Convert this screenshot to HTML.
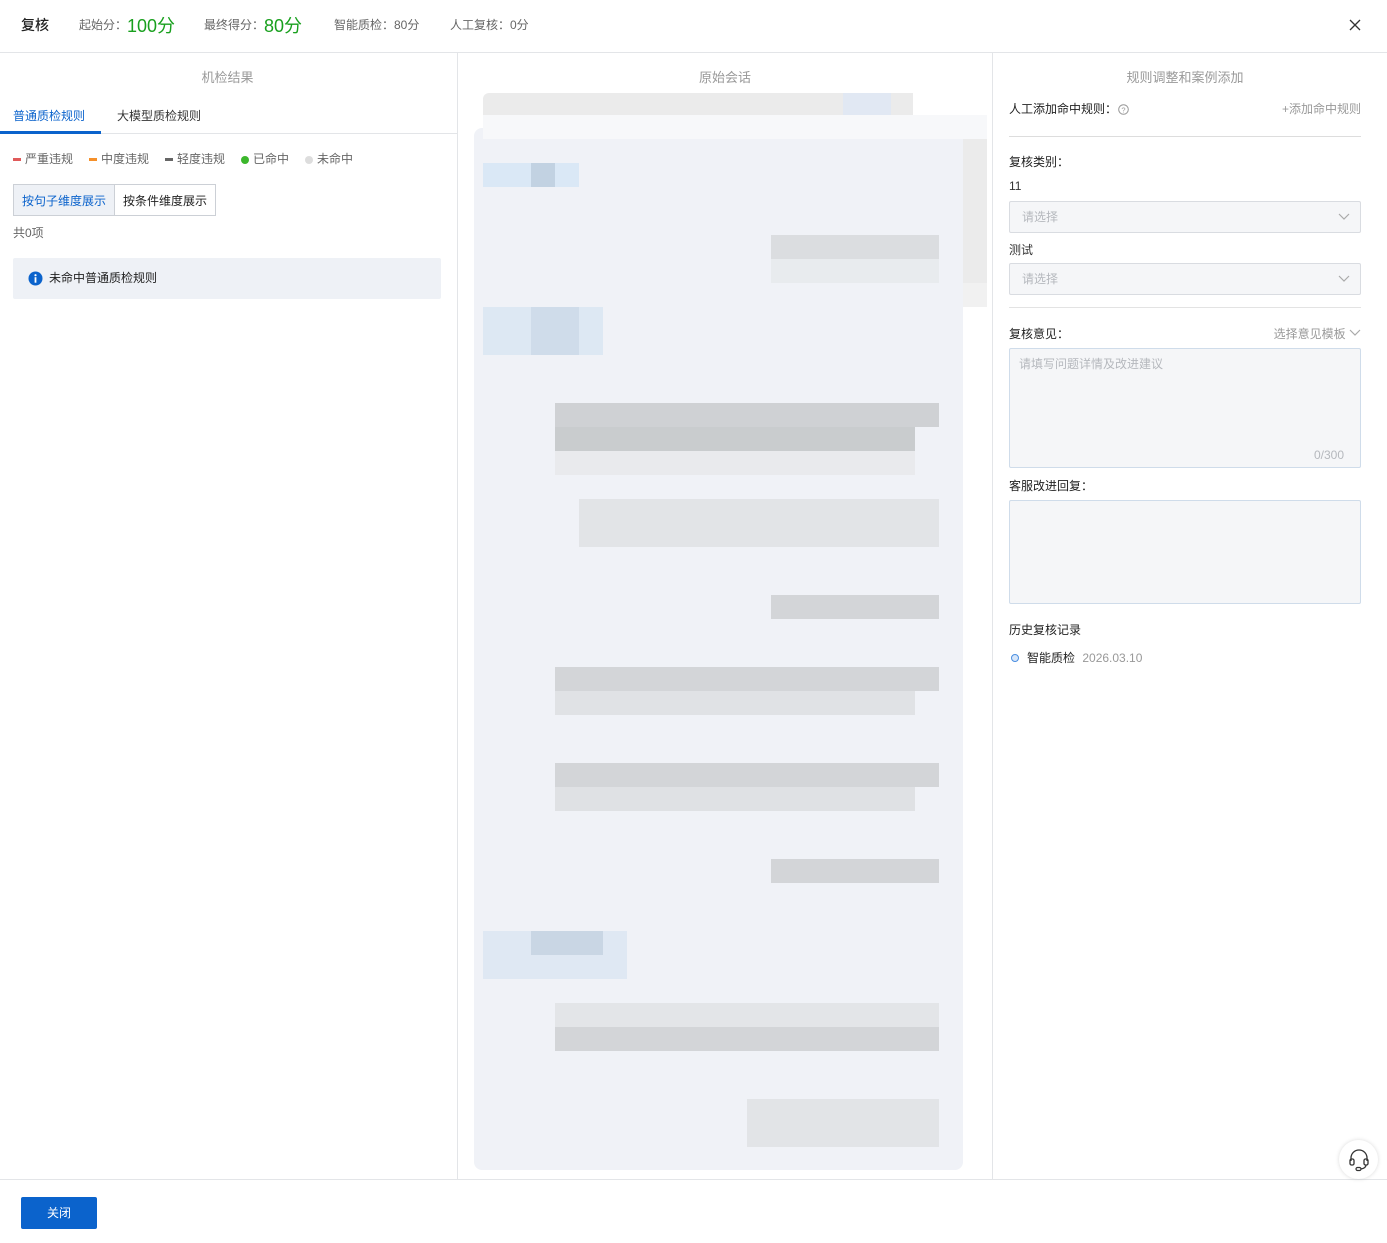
<!DOCTYPE html>
<html><head><meta charset="utf-8"><style>
*{margin:0;padding:0;box-sizing:border-box}
body{width:1387px;height:1243px;background:#fff;font-family:"Liberation Sans","Noto Sans CJK SC",sans-serif;font-size:12px;color:#333;position:relative;overflow:hidden}
.a{position:absolute;white-space:nowrap}
.b{position:absolute}
.sel{position:absolute;left:1009px;width:352px;height:32px;border:1px solid #d9dce1;background:#f5f6f8;border-radius:2px;color:#b5b8bd;padding:6px 12px}
.chev{position:absolute;right:10px;top:8px}
.lg{position:absolute;top:150px;color:#666}
.lg i{display:inline-block;vertical-align:middle;margin-right:4px}
</style></head><body>
<!-- header -->
<div class="a" style="left:21px;top:15px;font-size:14px;color:#222;font-weight:500">复核</div>
<div class="a" style="left:79px;top:16px;color:#666">起始分：</div>
<div class="a" style="left:127px;top:12px;font-size:18px;color:#19a01e">100分</div>
<div class="a" style="left:204px;top:16px;color:#666">最终得分：</div>
<div class="a" style="left:264px;top:12px;font-size:18px;color:#19a01e">80分</div>
<div class="a" style="left:334px;top:16px;color:#666">智能质检：80分</div>
<div class="a" style="left:450px;top:16px;color:#666">人工复核：0分</div>
<svg class="a" style="left:1349px;top:19px" width="12" height="12"><path d="M1 1L11 11M11 1L1 11" stroke="#333" stroke-width="1.3"/></svg>
<div class="a" style="left:0;top:52px;width:1387px;height:1px;background:#e3e5e8"></div>
<div class="a" style="left:457px;top:53px;width:1px;height:1126px;background:#e3e5e8"></div>
<div class="a" style="left:992px;top:53px;width:1px;height:1126px;background:#e3e5e8"></div>
<div class="a" style="left:0;top:1179px;width:1387px;height:1px;background:#e3e5e8"></div>

<!-- left -->
<div class="a" style="left:0;width:455px;top:67px;text-align:center;font-size:13px;color:#999">机检结果</div>
<div class="a" style="left:13px;top:107px;color:#0b63cc">普通质检规则</div>
<div class="a" style="left:117px;top:107px;color:#333">大模型质检规则</div>
<div class="a" style="left:0;top:133px;width:457px;height:1px;background:#e3e5e8"></div>
<div class="a" style="left:0;top:131px;width:101px;height:3px;background:#0b63cc"></div>
<div class="lg" style="left:13px"><i style="width:8px;height:3px;background:#e05a5a"></i>严重违规</div>
<div class="lg" style="left:89px"><i style="width:8px;height:3px;background:#f5902a"></i>中度违规</div>
<div class="lg" style="left:165px"><i style="width:8px;height:3px;background:#666"></i>轻度违规</div>
<div class="lg" style="left:241px"><i style="width:8px;height:8px;border-radius:50%;background:#3cb72c"></i>已命中</div>
<div class="lg" style="left:305px"><i style="width:8px;height:8px;border-radius:50%;background:#ddd"></i>未命中</div>
<div class="a" style="left:13px;top:184px;width:102px;height:32px;border:1px solid #ccd0d6;background:#eef1f6;color:#0b63cc;padding-top:7px;text-align:center">按句子维度展示</div>
<div class="a" style="left:114px;top:184px;width:102px;height:32px;border:1px solid #ccd0d6;color:#222;padding-top:7px;text-align:center">按条件维度展示</div>
<div class="a" style="left:13px;top:224px;color:#666">共0项</div>
<div class="a" style="left:13px;top:258px;width:428px;height:41px;background:#eef1f6;border-radius:2px"></div>
<svg class="a" style="left:28px;top:271px" width="15" height="15"><circle cx="7.5" cy="7.5" r="7" fill="#0b63cc"/><rect x="6.6" y="6.2" width="1.8" height="5.5" fill="#fff"/><circle cx="7.5" cy="4.2" r="1.1" fill="#fff"/></svg>
<div class="a" style="left:49px;top:269px;color:#222">未命中普通质检规则</div>

<!-- middle -->
<div class="a" style="left:458px;width:534px;top:67px;text-align:center;font-size:13px;color:#999">原始会话</div>
<div class="b" style="left:474px;top:128px;width:489px;height:1042px;background:#f0f2f7;border-radius:8px"></div>
<div class="b" style="left:483px;top:93px;width:430px;height:22px;background:#ebebeb;border-radius:6px 0 0 0"></div>
<div class="b" style="left:843px;top:93px;width:48px;height:22px;background:#e1e8f3"></div>
<div class="b" style="left:483px;top:115px;width:504px;height:24px;background:#f7f8fa"></div>
<div class="b" style="left:963px;top:139px;width:24px;height:144px;background:#ebebeb"></div>
<div class="b" style="left:963px;top:283px;width:24px;height:24px;background:#f1f1f1"></div>
<div class="b" style="left:483px;top:163px;width:96px;height:24px;background:#dae8f6"></div>
<div class="b" style="left:531px;top:163px;width:24px;height:24px;background:#c2d2e2"></div>
<div class="b" style="left:771px;top:235px;width:168px;height:24px;background:#dbdde0"></div>
<div class="b" style="left:771px;top:259px;width:168px;height:24px;background:#e8ebee"></div>
<div class="b" style="left:483px;top:307px;width:120px;height:48px;background:#dde8f3"></div>
<div class="b" style="left:531px;top:307px;width:48px;height:48px;background:#cfdcea"></div>
<div class="b" style="left:555px;top:403px;width:384px;height:24px;background:#cfd1d4"></div>
<div class="b" style="left:555px;top:427px;width:360px;height:24px;background:#c9ccce"></div>
<div class="b" style="left:555px;top:451px;width:360px;height:24px;background:#e9eaed"></div>
<div class="b" style="left:579px;top:499px;width:360px;height:48px;background:#e2e4e7"></div>
<div class="b" style="left:771px;top:595px;width:168px;height:24px;background:#d3d5d8"></div>
<div class="b" style="left:555px;top:667px;width:384px;height:24px;background:#d3d5d8"></div>
<div class="b" style="left:555px;top:691px;width:360px;height:24px;background:#e0e2e5"></div>
<div class="b" style="left:555px;top:763px;width:384px;height:24px;background:#d3d5d8"></div>
<div class="b" style="left:555px;top:787px;width:360px;height:24px;background:#dfe1e4"></div>
<div class="b" style="left:771px;top:859px;width:168px;height:24px;background:#d3d5d8"></div>
<div class="b" style="left:483px;top:931px;width:144px;height:48px;background:#dfe8f3"></div>
<div class="b" style="left:531px;top:931px;width:72px;height:24px;background:#c9d6e4"></div>
<div class="b" style="left:555px;top:1003px;width:384px;height:24px;background:#e3e5e8"></div>
<div class="b" style="left:555px;top:1027px;width:384px;height:24px;background:#d3d5d8"></div>
<div class="b" style="left:747px;top:1099px;width:192px;height:48px;background:#e2e4e7"></div>

<!-- right -->
<div class="a" style="left:985px;width:400px;top:67px;text-align:center;font-size:13px;color:#999">规则调整和案例添加</div>
<div class="a" style="left:1009px;top:100px;color:#222">人工添加命中规则：</div>
<svg class="a" style="left:1118px;top:104px" width="11" height="11"><circle cx="5.5" cy="5.5" r="4.8" fill="none" stroke="#999"/><text x="5.5" y="8.3" font-size="7.5" text-anchor="middle" fill="#999">?</text></svg>
<div class="a" style="right:26px;top:100px;color:#999">+添加命中规则</div>
<div class="a" style="left:1009px;top:136px;width:352px;height:1px;background:#ddd"></div>
<div class="a" style="left:1009px;top:153px;color:#222">复核类别：</div>
<div class="a" style="left:1009px;top:179px;color:#333">11</div>
<div class="sel" style="top:201px">请选择<svg class="chev" width="12" height="14"><path d="M1 4L6 9L11 4" fill="none" stroke="#aaa" stroke-width="1.2"/></svg></div>
<div class="a" style="left:1009px;top:241px;color:#333">测试</div>
<div class="sel" style="top:263px">请选择<svg class="chev" width="12" height="14"><path d="M1 4L6 9L11 4" fill="none" stroke="#aaa" stroke-width="1.2"/></svg></div>
<div class="a" style="left:1009px;top:307px;width:352px;height:1px;background:#e3e3e3"></div>
<div class="a" style="left:1009px;top:325px;color:#222">复核意见：</div>
<div class="a" style="right:26px;top:325px;color:#999">选择意见模板 <svg width="12" height="10"><path d="M1 2L6 7L11 2" fill="none" stroke="#aaa" stroke-width="1.2"/></svg></div>
<div class="a" style="left:1009px;top:348px;width:352px;height:120px;border:1px solid #cfdcea;background:#f5f6f8;border-radius:2px"></div>
<div class="a" style="left:1019px;top:355px;color:#b5b8bd">请填写问题详情及改进建议</div>
<div class="a" style="left:1314px;top:448px;color:#b5b8bd">0/300</div>
<div class="a" style="left:1009px;top:477px;color:#222">客服改进回复：</div>
<div class="a" style="left:1009px;top:500px;width:352px;height:104px;border:1px solid #cfdcea;background:#f5f6f8;border-radius:2px"></div>
<div class="a" style="left:1009px;top:621px;color:#222">历史复核记录</div>
<div class="a" style="left:1011px;top:654px;width:8px;height:8px;border-radius:50%;border:1.5px solid #4a8ee0;background:#d6e6fa"></div>
<div class="a" style="left:1027px;top:649px;color:#222">智能质检 <span style="color:#999;margin-left:4px">2026.03.10</span></div>

<!-- support -->
<div class="a" style="left:1339px;top:1140px;width:39px;height:39px;border-radius:50%;background:#fff;box-shadow:0 0 4px rgba(0,0,0,.15)"></div>
<svg class="a" style="left:1346px;top:1147px" width="26" height="26"><path d="M5 14V11a8 8 0 0 1 16 0v3" fill="none" stroke="#333" stroke-width="1.3"/><rect x="4" y="12" width="4" height="6" rx="1.5" fill="none" stroke="#333" stroke-width="1.3"/><rect x="18" y="12" width="4" height="6" rx="1.5" fill="none" stroke="#333" stroke-width="1.3"/><path d="M20 18q0 3-5 4" fill="none" stroke="#333" stroke-width="1.3"/><rect x="10" y="20.5" width="5" height="3" rx="1.5" fill="none" stroke="#333" stroke-width="1.2"/></svg>

<!-- footer -->
<div class="a" style="left:21px;top:1197px;width:76px;height:32px;background:#0b63cc;border-radius:2px;color:#fff;text-align:center;padding-top:7px">关闭</div>
</body></html>
